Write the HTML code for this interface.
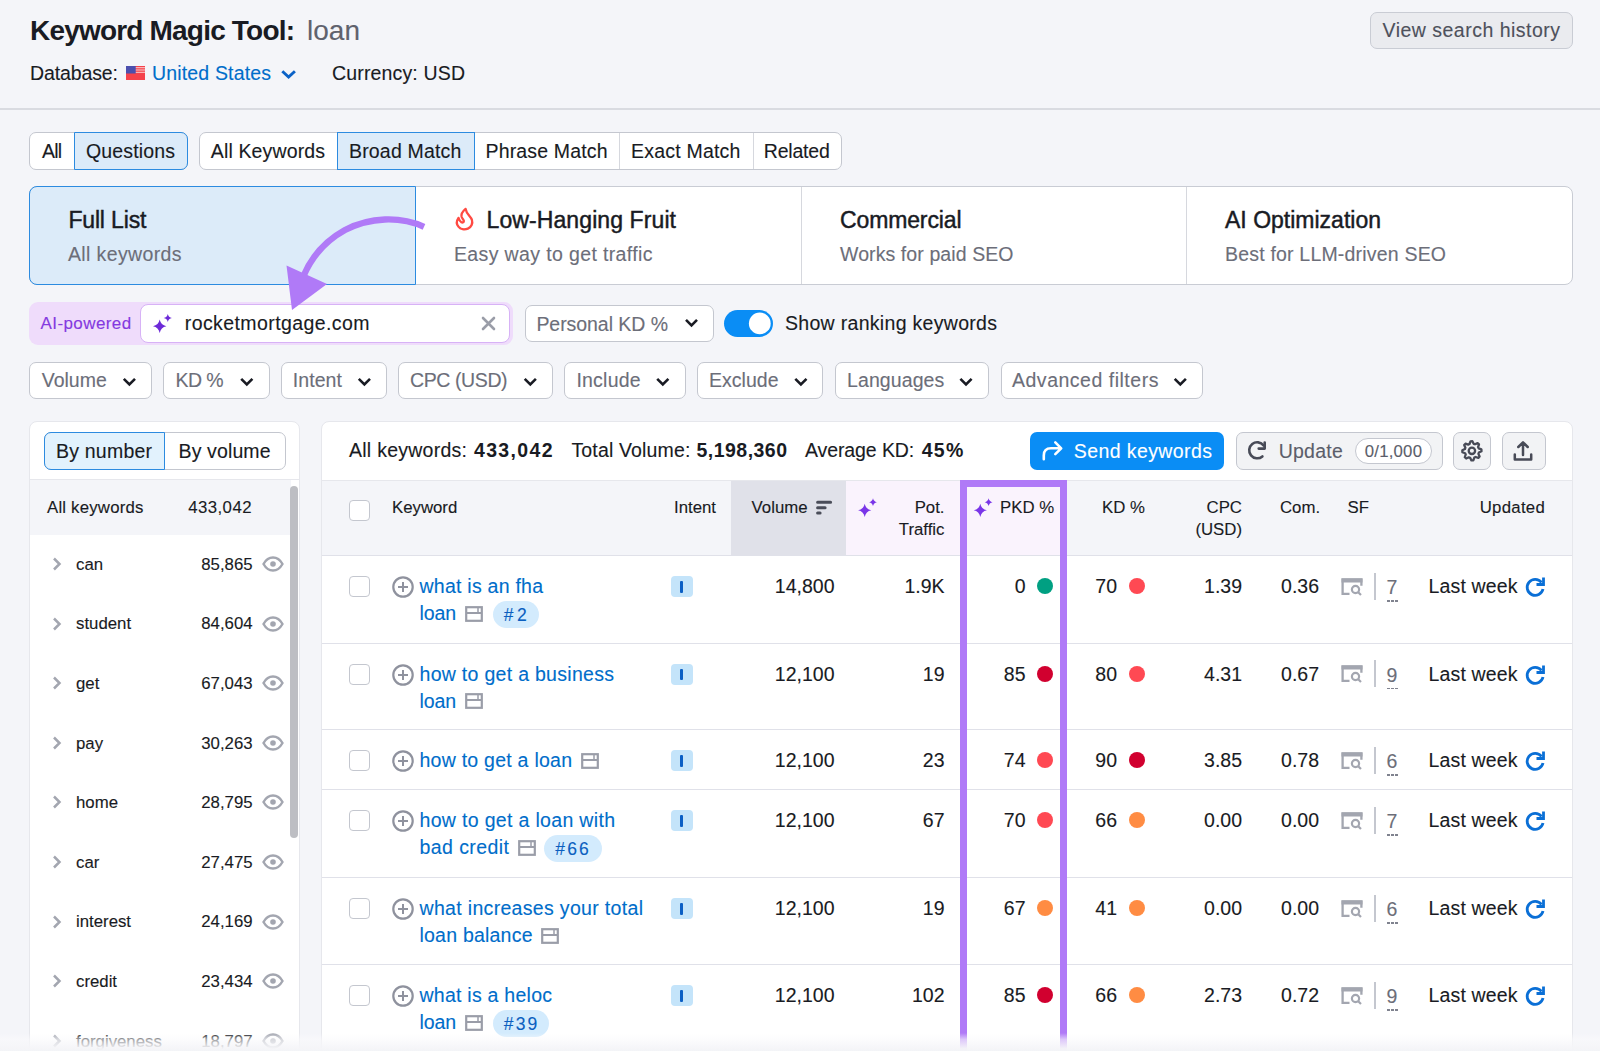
<!DOCTYPE html>
<html><head><meta charset="utf-8"><style>*{box-sizing:border-box;margin:0;padding:0}
html,body{width:1600px;height:1051px;overflow:hidden;background:#f4f5f9;font-family:"Liberation Sans",sans-serif;color:#191b23}
.a{position:absolute}
.t{position:absolute;white-space:nowrap;line-height:1;-webkit-text-stroke:0.12px currentColor}
.cb{width:21px;height:21px;border:1px solid #c4c7cf;border-radius:4px;background:#fff}
.ib{width:21.5px;height:21px;border-radius:4px;background:#c4e4fa}
.ib i{position:absolute;left:9.3px;top:5px;width:3px;height:11.5px;background:#0b5fc4;border-radius:1px}
.dot{width:16px;height:16px;border-radius:50%}
</style></head><body>
<div class="a" style="left:1370px;top:11.5px;width:202.5px;height:37.0px;border:1px solid #c9ccd4;border-radius:7px;background:#eaebef"></div>
<div class="a" style="left:0px;top:107.5px;width:1600px;height:2.0px;background:#d9dbe1"></div>
<div class="a" style="left:29px;top:131.5px;width:158.5px;height:38.0px;border:1px solid #c4c7cf;border-radius:7px;background:#fff"></div>
<div class="a" style="left:73.5px;top:131.5px;width:114.0px;height:38.0px;border:1px solid #2c8be0;border-radius:0 7px 7px 0;background:#dcebf9"></div>
<div class="a" style="left:199px;top:131.5px;width:642.5px;height:38.0px;border:1px solid #c4c7cf;border-radius:7px;background:#fff"></div>
<div class="a" style="left:337px;top:131.5px;width:137.5px;height:38.0px;border:1px solid #2c8be0;background:#dcebf9"></div>
<div class="a" style="left:619px;top:132.5px;width:1px;height:36.0px;background:#d6d8de"></div>
<div class="a" style="left:752.5px;top:132.5px;width:1.0px;height:36.0px;background:#d6d8de"></div>
<div class="a" style="left:29px;top:185.5px;width:1543.5px;height:99.5px;border:1px solid #c9ccd4;border-radius:8px;background:#fff"></div>
<div class="a" style="left:801px;top:186.5px;width:1px;height:97.5px;background:#d6d8de"></div>
<div class="a" style="left:1186px;top:186.5px;width:1px;height:97.5px;background:#d6d8de"></div>
<div class="a" style="left:29px;top:185.5px;width:387px;height:99.5px;border:1px solid #2c8be0;border-radius:8px 0 0 8px;background:#dcebf9"></div>
<div class="a" style="left:29px;top:302px;width:483.5px;height:42.5px;border-radius:9px;background:#efdcfb"></div>
<div class="a" style="left:139.5px;top:304px;width:370.5px;height:38.5px;border:1.5px solid #d7b2f6;border-radius:8px;background:#fff"></div>
<div class="a" style="left:524.5px;top:304.5px;width:189.0px;height:37.5px;border:1px solid #c4c7cf;border-radius:7px;background:#fff"></div>
<div class="a" style="left:724px;top:310px;width:49px;height:27px;border-radius:14px;background:#0a8df5"></div>
<div class="a" style="left:28.75px;top:361.5px;width:123.25px;height:37.5px;border:1px solid #c4c7cf;border-radius:7px;background:#fff"></div>
<div class="a" style="left:162.8px;top:361.5px;width:106.80000000000001px;height:37.5px;border:1px solid #c4c7cf;border-radius:7px;background:#fff"></div>
<div class="a" style="left:280.8px;top:361.5px;width:106.0px;height:37.5px;border:1px solid #c4c7cf;border-radius:7px;background:#fff"></div>
<div class="a" style="left:398px;top:361.5px;width:155px;height:37.5px;border:1px solid #c4c7cf;border-radius:7px;background:#fff"></div>
<div class="a" style="left:564px;top:361.5px;width:122px;height:37.5px;border:1px solid #c4c7cf;border-radius:7px;background:#fff"></div>
<div class="a" style="left:697px;top:361.5px;width:126.39999999999998px;height:37.5px;border:1px solid #c4c7cf;border-radius:7px;background:#fff"></div>
<div class="a" style="left:834.7px;top:361.5px;width:154.29999999999995px;height:37.5px;border:1px solid #c4c7cf;border-radius:7px;background:#fff"></div>
<div class="a" style="left:1000.5px;top:361.5px;width:202.5px;height:37.5px;border:1px solid #c4c7cf;border-radius:7px;background:#fff"></div>
<div class="a" style="left:29px;top:420.5px;width:271px;height:679.5px;border:1px solid #e6e7ec;border-radius:8px;background:#fff"></div>
<div class="a" style="left:43.5px;top:432px;width:242.0px;height:37.5px;border:1px solid #c4c7cf;border-radius:7px;background:#fff"></div>
<div class="a" style="left:43.5px;top:432px;width:121.5px;height:37.5px;border:1px solid #2c8be0;border-radius:7px 0 0 7px;background:#e2f2fd"></div>
<div class="a" style="left:30px;top:478.5px;width:269px;height:1.0px;background:#e6e7ec"></div>
<div class="a" style="left:30px;top:479.5px;width:261px;height:55.0px;background:#f4f5f9"></div>
<div class="a" style="left:290.2px;top:486px;width:8.0px;height:352px;border-radius:4px;background:#bdbec3"></div>
<svg class="a" style="left:51px;top:556.0px" width="12" height="16" viewBox="0 0 12 16"><path d="M3 2.5l5.5 5.5L3 13.5" fill="none" stroke="#a3a6b0" stroke-width="2.5"/></svg>
<svg class="a" style="left:262px;top:555.0px" width="22" height="18" viewBox="0 0 22 18"><path d="M1.5 9C4 4.5 7.2 2.5 11 2.5S18 4.5 20.5 9C18 13.5 14.8 15.5 11 15.5S4 13.5 1.5 9Z" fill="none" stroke="#a3a6b0" stroke-width="2.4"/><circle cx="11" cy="9" r="2.8" fill="#a3a6b0"/></svg>
<svg class="a" style="left:51px;top:615.6px" width="12" height="16" viewBox="0 0 12 16"><path d="M3 2.5l5.5 5.5L3 13.5" fill="none" stroke="#a3a6b0" stroke-width="2.5"/></svg>
<svg class="a" style="left:262px;top:614.6px" width="22" height="18" viewBox="0 0 22 18"><path d="M1.5 9C4 4.5 7.2 2.5 11 2.5S18 4.5 20.5 9C18 13.5 14.8 15.5 11 15.5S4 13.5 1.5 9Z" fill="none" stroke="#a3a6b0" stroke-width="2.4"/><circle cx="11" cy="9" r="2.8" fill="#a3a6b0"/></svg>
<svg class="a" style="left:51px;top:675.2px" width="12" height="16" viewBox="0 0 12 16"><path d="M3 2.5l5.5 5.5L3 13.5" fill="none" stroke="#a3a6b0" stroke-width="2.5"/></svg>
<svg class="a" style="left:262px;top:674.2px" width="22" height="18" viewBox="0 0 22 18"><path d="M1.5 9C4 4.5 7.2 2.5 11 2.5S18 4.5 20.5 9C18 13.5 14.8 15.5 11 15.5S4 13.5 1.5 9Z" fill="none" stroke="#a3a6b0" stroke-width="2.4"/><circle cx="11" cy="9" r="2.8" fill="#a3a6b0"/></svg>
<svg class="a" style="left:51px;top:734.8px" width="12" height="16" viewBox="0 0 12 16"><path d="M3 2.5l5.5 5.5L3 13.5" fill="none" stroke="#a3a6b0" stroke-width="2.5"/></svg>
<svg class="a" style="left:262px;top:733.8px" width="22" height="18" viewBox="0 0 22 18"><path d="M1.5 9C4 4.5 7.2 2.5 11 2.5S18 4.5 20.5 9C18 13.5 14.8 15.5 11 15.5S4 13.5 1.5 9Z" fill="none" stroke="#a3a6b0" stroke-width="2.4"/><circle cx="11" cy="9" r="2.8" fill="#a3a6b0"/></svg>
<svg class="a" style="left:51px;top:794.4px" width="12" height="16" viewBox="0 0 12 16"><path d="M3 2.5l5.5 5.5L3 13.5" fill="none" stroke="#a3a6b0" stroke-width="2.5"/></svg>
<svg class="a" style="left:262px;top:793.4px" width="22" height="18" viewBox="0 0 22 18"><path d="M1.5 9C4 4.5 7.2 2.5 11 2.5S18 4.5 20.5 9C18 13.5 14.8 15.5 11 15.5S4 13.5 1.5 9Z" fill="none" stroke="#a3a6b0" stroke-width="2.4"/><circle cx="11" cy="9" r="2.8" fill="#a3a6b0"/></svg>
<svg class="a" style="left:51px;top:854.0px" width="12" height="16" viewBox="0 0 12 16"><path d="M3 2.5l5.5 5.5L3 13.5" fill="none" stroke="#a3a6b0" stroke-width="2.5"/></svg>
<svg class="a" style="left:262px;top:853.0px" width="22" height="18" viewBox="0 0 22 18"><path d="M1.5 9C4 4.5 7.2 2.5 11 2.5S18 4.5 20.5 9C18 13.5 14.8 15.5 11 15.5S4 13.5 1.5 9Z" fill="none" stroke="#a3a6b0" stroke-width="2.4"/><circle cx="11" cy="9" r="2.8" fill="#a3a6b0"/></svg>
<svg class="a" style="left:51px;top:913.6px" width="12" height="16" viewBox="0 0 12 16"><path d="M3 2.5l5.5 5.5L3 13.5" fill="none" stroke="#a3a6b0" stroke-width="2.5"/></svg>
<svg class="a" style="left:262px;top:912.6px" width="22" height="18" viewBox="0 0 22 18"><path d="M1.5 9C4 4.5 7.2 2.5 11 2.5S18 4.5 20.5 9C18 13.5 14.8 15.5 11 15.5S4 13.5 1.5 9Z" fill="none" stroke="#a3a6b0" stroke-width="2.4"/><circle cx="11" cy="9" r="2.8" fill="#a3a6b0"/></svg>
<svg class="a" style="left:51px;top:973.2px" width="12" height="16" viewBox="0 0 12 16"><path d="M3 2.5l5.5 5.5L3 13.5" fill="none" stroke="#a3a6b0" stroke-width="2.5"/></svg>
<svg class="a" style="left:262px;top:972.2px" width="22" height="18" viewBox="0 0 22 18"><path d="M1.5 9C4 4.5 7.2 2.5 11 2.5S18 4.5 20.5 9C18 13.5 14.8 15.5 11 15.5S4 13.5 1.5 9Z" fill="none" stroke="#a3a6b0" stroke-width="2.4"/><circle cx="11" cy="9" r="2.8" fill="#a3a6b0"/></svg>
<svg class="a" style="left:51px;top:1032.8px" width="12" height="16" viewBox="0 0 12 16"><path d="M3 2.5l5.5 5.5L3 13.5" fill="none" stroke="#a3a6b0" stroke-width="2.5"/></svg>
<svg class="a" style="left:262px;top:1031.8px" width="22" height="18" viewBox="0 0 22 18"><path d="M1.5 9C4 4.5 7.2 2.5 11 2.5S18 4.5 20.5 9C18 13.5 14.8 15.5 11 15.5S4 13.5 1.5 9Z" fill="none" stroke="#a3a6b0" stroke-width="2.4"/><circle cx="11" cy="9" r="2.8" fill="#a3a6b0"/></svg>
<div class="a" style="left:321px;top:420.5px;width:1252px;height:679.5px;border:1px solid #e6e7ec;border-radius:8px;background:#fff"></div>
<div class="a" style="left:1030px;top:432px;width:194px;height:37.5px;border-radius:7px;background:#0a8df5"></div>
<div class="a" style="left:1235.5px;top:432px;width:207.0px;height:37.5px;border:1px solid #c4c7cf;border-radius:7px;background:#f2f3f5"></div>
<div class="a" style="left:1354.6px;top:438px;width:77.70000000000005px;height:26px;border:1px solid #c4c7cf;border-radius:13px;background:#fff"></div>
<div class="a" style="left:1453px;top:432px;width:37.5px;height:37.5px;border:1px solid #c4c7cf;border-radius:7px;background:#f2f3f5"></div>
<div class="a" style="left:1501.5px;top:432px;width:44.0px;height:37.5px;border:1px solid #c4c7cf;border-radius:7px;background:#f2f3f5"></div>
<div class="a" style="left:322px;top:480px;width:1250px;height:75.5px;background:#f4f5f9;border-top:1px solid #e6e7ec;border-bottom:1px solid #e0e1e9"></div>
<div class="a" style="left:730.7px;top:481px;width:115.29999999999995px;height:73.5px;background:#e0e1e9"></div>
<div class="a" style="left:846px;top:481px;width:114px;height:73.5px;background:#faf3fd"></div>
<div class="a" style="left:960px;top:481px;width:107px;height:73.5px;background:#faf3fd"></div>
<div class="a cb" style="left:349px;top:499.5px"></div>
<div class="a" style="left:322px;top:642.5px;width:1250px;height:1.0px;background:#e0e1e9"></div>
<div class="a cb" style="left:349px;top:576.0px"></div>
<svg class="a" style="left:392px;top:576.0px" width="22" height="22" viewBox="0 0 22 22"><circle cx="11" cy="11" r="9.7" fill="none" stroke="#8f929e" stroke-width="2.2"/><path d="M11 6v10M6 11h10" stroke="#8f929e" stroke-width="2"/></svg>
<svg class="a" style="left:464.5px;top:605.5px" width="18" height="16" viewBox="0 0 18 16"><rect x="1.2" y="1.2" width="15.6" height="13.6" fill="none" stroke="#9a9da8" stroke-width="2.2"/><path d="M1.5 7h15" stroke="#9a9da8" stroke-width="2"/><path d="M13 2v4" stroke="#9a9da8" stroke-width="1.5"/></svg>
<div class="a" style="left:492.5px;top:601.0px;width:46.25px;height:27.0px;border-radius:14px;background:#d3ebfd"></div>
<div class="a ib" style="left:671px;top:576.0px"><i></i></div>
<div class="a dot" style="left:1037px;top:578.0px;background:#00a082"></div>
<div class="a dot" style="left:1128.5px;top:578.0px;background:#ff4953"></div>
<svg class="a" style="left:1341px;top:577.5px" width="22" height="18" viewBox="0 0 22 18"><path d="M8.5 15.8H1.6V1.5h18.8V7.8" fill="none" stroke="#a3a6b0" stroke-width="2.3"/><rect x="0.5" y="0.5" width="21" height="4" fill="#a3a6b0"/><circle cx="14.5" cy="11.5" r="3.6" fill="none" stroke="#a3a6b0" stroke-width="2.2"/><path d="M17 14l3 3" stroke="#a3a6b0" stroke-width="2.2"/></svg>
<div class="a" style="left:1374px;top:572.5px;width:1.5px;height:27.0px;background:#c4c7cf"></div>
<div class="a" style="left:1386.5px;top:600.0px;width:11.0px;height:1.6000000000000227px;background:repeating-linear-gradient(90deg,#80838f 0 3px,transparent 3px 4px)"></div>
<svg class="a" style="left:1524px;top:576.0px" width="22" height="22" viewBox="0 0 22 22"><path d="M17.5 6.5A8 8 0 1 0 19 13" fill="none" stroke="#0a6fd6" stroke-width="2.8"/><path d="M19.5 1.5v7h-7" fill="none" stroke="#0a6fd6" stroke-width="2.8"/></svg>
<div class="a" style="left:322px;top:729.0px;width:1250px;height:1.0px;background:#e0e1e9"></div>
<div class="a cb" style="left:349px;top:663.5px"></div>
<svg class="a" style="left:392px;top:663.5px" width="22" height="22" viewBox="0 0 22 22"><circle cx="11" cy="11" r="9.7" fill="none" stroke="#8f929e" stroke-width="2.2"/><path d="M11 6v10M6 11h10" stroke="#8f929e" stroke-width="2"/></svg>
<svg class="a" style="left:464.5px;top:693.0px" width="18" height="16" viewBox="0 0 18 16"><rect x="1.2" y="1.2" width="15.6" height="13.6" fill="none" stroke="#9a9da8" stroke-width="2.2"/><path d="M1.5 7h15" stroke="#9a9da8" stroke-width="2"/><path d="M13 2v4" stroke="#9a9da8" stroke-width="1.5"/></svg>
<div class="a ib" style="left:671px;top:663.5px"><i></i></div>
<div class="a dot" style="left:1037px;top:665.5px;background:#d1002f"></div>
<div class="a dot" style="left:1128.5px;top:665.5px;background:#ff4953"></div>
<svg class="a" style="left:1341px;top:665.0px" width="22" height="18" viewBox="0 0 22 18"><path d="M8.5 15.8H1.6V1.5h18.8V7.8" fill="none" stroke="#a3a6b0" stroke-width="2.3"/><rect x="0.5" y="0.5" width="21" height="4" fill="#a3a6b0"/><circle cx="14.5" cy="11.5" r="3.6" fill="none" stroke="#a3a6b0" stroke-width="2.2"/><path d="M17 14l3 3" stroke="#a3a6b0" stroke-width="2.2"/></svg>
<div class="a" style="left:1374px;top:660.0px;width:1.5px;height:27.0px;background:#c4c7cf"></div>
<div class="a" style="left:1386.5px;top:687.5px;width:11.0px;height:1.6000000000000227px;background:repeating-linear-gradient(90deg,#80838f 0 3px,transparent 3px 4px)"></div>
<svg class="a" style="left:1524px;top:663.5px" width="22" height="22" viewBox="0 0 22 22"><path d="M17.5 6.5A8 8 0 1 0 19 13" fill="none" stroke="#0a6fd6" stroke-width="2.8"/><path d="M19.5 1.5v7h-7" fill="none" stroke="#0a6fd6" stroke-width="2.8"/></svg>
<div class="a" style="left:322px;top:789.0px;width:1250px;height:1.0px;background:#e0e1e9"></div>
<div class="a cb" style="left:349px;top:750.0px"></div>
<svg class="a" style="left:392px;top:750.0px" width="22" height="22" viewBox="0 0 22 22"><circle cx="11" cy="11" r="9.7" fill="none" stroke="#8f929e" stroke-width="2.2"/><path d="M11 6v10M6 11h10" stroke="#8f929e" stroke-width="2"/></svg>
<svg class="a" style="left:580.75px;top:752.5px" width="18" height="16" viewBox="0 0 18 16"><rect x="1.2" y="1.2" width="15.6" height="13.6" fill="none" stroke="#9a9da8" stroke-width="2.2"/><path d="M1.5 7h15" stroke="#9a9da8" stroke-width="2"/><path d="M13 2v4" stroke="#9a9da8" stroke-width="1.5"/></svg>
<div class="a ib" style="left:671px;top:750.0px"><i></i></div>
<div class="a dot" style="left:1037px;top:752.0px;background:#ff4953"></div>
<div class="a dot" style="left:1128.5px;top:752.0px;background:#d1002f"></div>
<svg class="a" style="left:1341px;top:751.5px" width="22" height="18" viewBox="0 0 22 18"><path d="M8.5 15.8H1.6V1.5h18.8V7.8" fill="none" stroke="#a3a6b0" stroke-width="2.3"/><rect x="0.5" y="0.5" width="21" height="4" fill="#a3a6b0"/><circle cx="14.5" cy="11.5" r="3.6" fill="none" stroke="#a3a6b0" stroke-width="2.2"/><path d="M17 14l3 3" stroke="#a3a6b0" stroke-width="2.2"/></svg>
<div class="a" style="left:1374px;top:746.5px;width:1.5px;height:27.0px;background:#c4c7cf"></div>
<div class="a" style="left:1386.5px;top:774.0px;width:11.0px;height:1.6000000000000227px;background:repeating-linear-gradient(90deg,#80838f 0 3px,transparent 3px 4px)"></div>
<svg class="a" style="left:1524px;top:750.0px" width="22" height="22" viewBox="0 0 22 22"><path d="M17.5 6.5A8 8 0 1 0 19 13" fill="none" stroke="#0a6fd6" stroke-width="2.8"/><path d="M19.5 1.5v7h-7" fill="none" stroke="#0a6fd6" stroke-width="2.8"/></svg>
<div class="a" style="left:322px;top:877.0px;width:1250px;height:1.0px;background:#e0e1e9"></div>
<div class="a cb" style="left:349px;top:810.0px"></div>
<svg class="a" style="left:392px;top:810.0px" width="22" height="22" viewBox="0 0 22 22"><circle cx="11" cy="11" r="9.7" fill="none" stroke="#8f929e" stroke-width="2.2"/><path d="M11 6v10M6 11h10" stroke="#8f929e" stroke-width="2"/></svg>
<svg class="a" style="left:517.5px;top:839.5px" width="18" height="16" viewBox="0 0 18 16"><rect x="1.2" y="1.2" width="15.6" height="13.6" fill="none" stroke="#9a9da8" stroke-width="2.2"/><path d="M1.5 7h15" stroke="#9a9da8" stroke-width="2"/><path d="M13 2v4" stroke="#9a9da8" stroke-width="1.5"/></svg>
<div class="a" style="left:544px;top:835.0px;width:58px;height:27.0px;border-radius:14px;background:#d3ebfd"></div>
<div class="a ib" style="left:671px;top:810.0px"><i></i></div>
<div class="a dot" style="left:1037px;top:812.0px;background:#ff4953"></div>
<div class="a dot" style="left:1128.5px;top:812.0px;background:#ff8c43"></div>
<svg class="a" style="left:1341px;top:811.5px" width="22" height="18" viewBox="0 0 22 18"><path d="M8.5 15.8H1.6V1.5h18.8V7.8" fill="none" stroke="#a3a6b0" stroke-width="2.3"/><rect x="0.5" y="0.5" width="21" height="4" fill="#a3a6b0"/><circle cx="14.5" cy="11.5" r="3.6" fill="none" stroke="#a3a6b0" stroke-width="2.2"/><path d="M17 14l3 3" stroke="#a3a6b0" stroke-width="2.2"/></svg>
<div class="a" style="left:1374px;top:806.5px;width:1.5px;height:27.0px;background:#c4c7cf"></div>
<div class="a" style="left:1386.5px;top:834.0px;width:11.0px;height:1.6000000000000227px;background:repeating-linear-gradient(90deg,#80838f 0 3px,transparent 3px 4px)"></div>
<svg class="a" style="left:1524px;top:810.0px" width="22" height="22" viewBox="0 0 22 22"><path d="M17.5 6.5A8 8 0 1 0 19 13" fill="none" stroke="#0a6fd6" stroke-width="2.8"/><path d="M19.5 1.5v7h-7" fill="none" stroke="#0a6fd6" stroke-width="2.8"/></svg>
<div class="a" style="left:322px;top:964.0px;width:1250px;height:1.0px;background:#e0e1e9"></div>
<div class="a cb" style="left:349px;top:898.0px"></div>
<svg class="a" style="left:392px;top:898.0px" width="22" height="22" viewBox="0 0 22 22"><circle cx="11" cy="11" r="9.7" fill="none" stroke="#8f929e" stroke-width="2.2"/><path d="M11 6v10M6 11h10" stroke="#8f929e" stroke-width="2"/></svg>
<svg class="a" style="left:540.75px;top:927.5px" width="18" height="16" viewBox="0 0 18 16"><rect x="1.2" y="1.2" width="15.6" height="13.6" fill="none" stroke="#9a9da8" stroke-width="2.2"/><path d="M1.5 7h15" stroke="#9a9da8" stroke-width="2"/><path d="M13 2v4" stroke="#9a9da8" stroke-width="1.5"/></svg>
<div class="a ib" style="left:671px;top:898.0px"><i></i></div>
<div class="a dot" style="left:1037px;top:900.0px;background:#ff8c43"></div>
<div class="a dot" style="left:1128.5px;top:900.0px;background:#ff8c43"></div>
<svg class="a" style="left:1341px;top:899.5px" width="22" height="18" viewBox="0 0 22 18"><path d="M8.5 15.8H1.6V1.5h18.8V7.8" fill="none" stroke="#a3a6b0" stroke-width="2.3"/><rect x="0.5" y="0.5" width="21" height="4" fill="#a3a6b0"/><circle cx="14.5" cy="11.5" r="3.6" fill="none" stroke="#a3a6b0" stroke-width="2.2"/><path d="M17 14l3 3" stroke="#a3a6b0" stroke-width="2.2"/></svg>
<div class="a" style="left:1374px;top:894.5px;width:1.5px;height:27.0px;background:#c4c7cf"></div>
<div class="a" style="left:1386.5px;top:922.0px;width:11.0px;height:1.6000000000000227px;background:repeating-linear-gradient(90deg,#80838f 0 3px,transparent 3px 4px)"></div>
<svg class="a" style="left:1524px;top:898.0px" width="22" height="22" viewBox="0 0 22 22"><path d="M17.5 6.5A8 8 0 1 0 19 13" fill="none" stroke="#0a6fd6" stroke-width="2.8"/><path d="M19.5 1.5v7h-7" fill="none" stroke="#0a6fd6" stroke-width="2.8"/></svg>
<div class="a cb" style="left:349px;top:985.0px"></div>
<svg class="a" style="left:392px;top:985.0px" width="22" height="22" viewBox="0 0 22 22"><circle cx="11" cy="11" r="9.7" fill="none" stroke="#8f929e" stroke-width="2.2"/><path d="M11 6v10M6 11h10" stroke="#8f929e" stroke-width="2"/></svg>
<svg class="a" style="left:464.5px;top:1014.5px" width="18" height="16" viewBox="0 0 18 16"><rect x="1.2" y="1.2" width="15.6" height="13.6" fill="none" stroke="#9a9da8" stroke-width="2.2"/><path d="M1.5 7h15" stroke="#9a9da8" stroke-width="2"/><path d="M13 2v4" stroke="#9a9da8" stroke-width="1.5"/></svg>
<div class="a" style="left:492.5px;top:1010.0px;width:56.5px;height:27.0px;border-radius:14px;background:#d3ebfd"></div>
<div class="a ib" style="left:671px;top:985.0px"><i></i></div>
<div class="a dot" style="left:1037px;top:987.0px;background:#d1002f"></div>
<div class="a dot" style="left:1128.5px;top:987.0px;background:#ff8c43"></div>
<svg class="a" style="left:1341px;top:986.5px" width="22" height="18" viewBox="0 0 22 18"><path d="M8.5 15.8H1.6V1.5h18.8V7.8" fill="none" stroke="#a3a6b0" stroke-width="2.3"/><rect x="0.5" y="0.5" width="21" height="4" fill="#a3a6b0"/><circle cx="14.5" cy="11.5" r="3.6" fill="none" stroke="#a3a6b0" stroke-width="2.2"/><path d="M17 14l3 3" stroke="#a3a6b0" stroke-width="2.2"/></svg>
<div class="a" style="left:1374px;top:981.5px;width:1.5px;height:27.0px;background:#c4c7cf"></div>
<div class="a" style="left:1386.5px;top:1009.0px;width:11.0px;height:1.6000000000000227px;background:repeating-linear-gradient(90deg,#80838f 0 3px,transparent 3px 4px)"></div>
<svg class="a" style="left:1524px;top:985.0px" width="22" height="22" viewBox="0 0 22 22"><path d="M17.5 6.5A8 8 0 1 0 19 13" fill="none" stroke="#0a6fd6" stroke-width="2.8"/><path d="M19.5 1.5v7h-7" fill="none" stroke="#0a6fd6" stroke-width="2.8"/></svg>
<div class="a" style="left:960px;top:480px;width:107px;height:580px;border:7px solid #b07af7;border-bottom:none"></div>
<div class="t" id="t0" style="top:17.29px;font-size:28px;color:#191b23;font-weight:bold;-webkit-text-stroke:0;letter-spacing:-0.806px;left:30px;">Keyword Magic Tool:</div>
<div class="t" id="t1" style="top:17.29px;font-size:28px;color:#5f626d;letter-spacing:0.021px;left:307px;">loan</div>
<div class="t" id="t2" style="top:21.49px;font-size:19.5px;color:#4e515c;letter-spacing:0.488px;left:1382.5px;">View search history</div>
<div class="t" id="t3" style="top:64.49px;font-size:19.5px;color:#191b23;letter-spacing:-0.113px;left:30px;">Database:</div>
<div class="t" id="t4" style="top:64.49px;font-size:19.5px;color:#006dca;letter-spacing:0.160px;left:152px;">United States</div>
<div class="t" id="t5" style="top:64.49px;font-size:19.5px;color:#191b23;letter-spacing:0.156px;left:332px;">Currency: USD</div>
<div class="t" id="t6" style="top:142.49px;font-size:19.5px;color:#191b23;letter-spacing:-0.836px;left:42px;">All</div>
<div class="t" id="t7" style="top:142.49px;font-size:19.5px;color:#191b23;letter-spacing:0.148px;left:86px;">Questions</div>
<div class="t" id="t8" style="top:142.49px;font-size:19.5px;color:#191b23;letter-spacing:0.135px;left:210.8px;">All Keywords</div>
<div class="t" id="t9" style="top:142.49px;font-size:19.5px;color:#191b23;letter-spacing:0.174px;left:349px;">Broad Match</div>
<div class="t" id="t10" style="top:142.49px;font-size:19.5px;color:#191b23;letter-spacing:0.153px;left:485.5px;">Phrase Match</div>
<div class="t" id="t11" style="top:142.49px;font-size:19.5px;color:#191b23;letter-spacing:0.210px;left:631px;">Exact Match</div>
<div class="t" id="t12" style="top:142.49px;font-size:19.5px;color:#191b23;letter-spacing:-0.203px;left:763.8px;">Related</div>
<div class="t" id="t13" style="top:209.33px;font-size:23px;color:#191b23;-webkit-text-stroke:0.45px currentColor;letter-spacing:-0.156px;left:68.4px;">Full List</div>
<div class="t" id="t14" style="top:245.49px;font-size:19.5px;color:#6c6e79;letter-spacing:0.368px;left:68px;">All keywords</div>
<div class="t" id="t15" style="top:209.33px;font-size:23px;color:#191b23;-webkit-text-stroke:0.45px currentColor;letter-spacing:0.099px;left:486.5px;">Low-Hanging Fruit</div>
<div class="t" id="t16" style="top:245.49px;font-size:19.5px;color:#6c6e79;letter-spacing:0.368px;left:454px;">Easy way to get traffic</div>
<div class="t" id="t17" style="top:209.33px;font-size:23px;color:#191b23;-webkit-text-stroke:0.45px currentColor;letter-spacing:-0.132px;left:840px;">Commercial</div>
<div class="t" id="t18" style="top:245.49px;font-size:19.5px;color:#6c6e79;letter-spacing:0.091px;left:840px;">Works for paid SEO</div>
<div class="t" id="t19" style="top:209.33px;font-size:23px;color:#191b23;-webkit-text-stroke:0.45px currentColor;letter-spacing:0.003px;left:1225px;">AI Optimization</div>
<div class="t" id="t20" style="top:245.49px;font-size:19.5px;color:#6c6e79;letter-spacing:0.193px;left:1225px;">Best for LLM-driven SEO</div>
<div class="t" id="t21" style="top:315.11px;font-size:17px;color:#8439e0;letter-spacing:0.396px;left:40.6px;">AI-powered</div>
<div class="t" id="t22" style="top:314.49px;font-size:19.5px;color:#191b23;letter-spacing:0.409px;left:184.8px;">rocketmortgage.com</div>
<div class="t" id="t23" style="top:314.99px;font-size:19.5px;color:#6c6e79;letter-spacing:-0.053px;left:536.4px;">Personal KD %</div>
<div class="t" id="t24" style="top:313.99px;font-size:19.5px;color:#191b23;letter-spacing:0.303px;left:785px;">Show ranking keywords</div>
<div class="t" id="t25" style="top:371.29px;font-size:19.5px;color:#6c6e79;letter-spacing:0.011px;left:41.7px;">Volume</div>
<div class="t" id="t26" style="top:371.29px;font-size:19.5px;color:#6c6e79;letter-spacing:-0.520px;left:175.4px;">KD %</div>
<div class="t" id="t27" style="top:371.29px;font-size:19.5px;color:#6c6e79;letter-spacing:0.101px;left:292.7px;">Intent</div>
<div class="t" id="t28" style="top:371.29px;font-size:19.5px;color:#6c6e79;letter-spacing:-0.394px;left:410px;">CPC (USD)</div>
<div class="t" id="t29" style="top:371.29px;font-size:19.5px;color:#6c6e79;letter-spacing:0.235px;left:576.4px;">Include</div>
<div class="t" id="t30" style="top:371.29px;font-size:19.5px;color:#6c6e79;letter-spacing:0.021px;left:709px;">Exclude</div>
<div class="t" id="t31" style="top:371.29px;font-size:19.5px;color:#6c6e79;letter-spacing:0.098px;left:847px;">Languages</div>
<div class="t" id="t32" style="top:371.29px;font-size:19.5px;color:#6c6e79;letter-spacing:0.510px;left:1012px;">Advanced filters</div>
<div class="t" id="t33" style="top:442.09px;font-size:19.5px;color:#191b23;letter-spacing:0.213px;left:56px;">By number</div>
<div class="t" id="t34" style="top:442.09px;font-size:19.5px;color:#191b23;letter-spacing:0.119px;left:178.6px;">By volume</div>
<div class="t" id="t35" style="top:500.38px;font-size:16.8px;color:#191b23;letter-spacing:0.200px;left:47px;">All keywords</div>
<div class="t" id="t36" style="top:500.38px;font-size:16.8px;color:#191b23;letter-spacing:0.455px;right:1348.00px;">433,042</div>
<div class="t" id="t37" style="top:556.78px;font-size:16.8px;color:#191b23;left:76px;">can</div>
<div class="t" id="t38" style="top:556.78px;font-size:16.8px;color:#191b23;right:1347.40px;">85,865</div>
<div class="t" id="t39" style="top:616.38px;font-size:16.8px;color:#191b23;left:76px;">student</div>
<div class="t" id="t40" style="top:616.38px;font-size:16.8px;color:#191b23;right:1347.40px;">84,604</div>
<div class="t" id="t41" style="top:675.98px;font-size:16.8px;color:#191b23;left:76px;">get</div>
<div class="t" id="t42" style="top:675.98px;font-size:16.8px;color:#191b23;right:1347.40px;">67,043</div>
<div class="t" id="t43" style="top:735.58px;font-size:16.8px;color:#191b23;left:76px;">pay</div>
<div class="t" id="t44" style="top:735.58px;font-size:16.8px;color:#191b23;right:1347.40px;">30,263</div>
<div class="t" id="t45" style="top:795.18px;font-size:16.8px;color:#191b23;left:76px;">home</div>
<div class="t" id="t46" style="top:795.18px;font-size:16.8px;color:#191b23;right:1347.40px;">28,795</div>
<div class="t" id="t47" style="top:854.78px;font-size:16.8px;color:#191b23;left:76px;">car</div>
<div class="t" id="t48" style="top:854.78px;font-size:16.8px;color:#191b23;right:1347.40px;">27,475</div>
<div class="t" id="t49" style="top:914.38px;font-size:16.8px;color:#191b23;left:76px;">interest</div>
<div class="t" id="t50" style="top:914.38px;font-size:16.8px;color:#191b23;right:1347.40px;">24,169</div>
<div class="t" id="t51" style="top:973.98px;font-size:16.8px;color:#191b23;left:76px;">credit</div>
<div class="t" id="t52" style="top:973.98px;font-size:16.8px;color:#191b23;right:1347.40px;">23,434</div>
<div class="t" id="t53" style="top:1033.58px;font-size:16.8px;color:#191b23;left:76px;">forgiveness</div>
<div class="t" id="t54" style="top:1033.58px;font-size:16.8px;color:#191b23;right:1347.40px;">18,797</div>
<div class="t" id="t55" style="top:441.49px;font-size:19.5px;color:#191b23;letter-spacing:0.260px;left:349px;">All keywords:</div>
<div class="t" id="t56" style="top:441.49px;font-size:19.5px;color:#191b23;font-weight:bold;-webkit-text-stroke:0;letter-spacing:1.333px;left:474px;">433,042</div>
<div class="t" id="t57" style="top:441.49px;font-size:19.5px;color:#191b23;letter-spacing:0.160px;left:571.4px;">Total Volume:</div>
<div class="t" id="t58" style="top:441.49px;font-size:19.5px;color:#191b23;font-weight:bold;-webkit-text-stroke:0;letter-spacing:0.467px;left:696.5px;">5,198,360</div>
<div class="t" id="t59" style="top:441.49px;font-size:19.5px;color:#191b23;letter-spacing:-0.100px;left:805px;">Average KD:</div>
<div class="t" id="t60" style="top:441.49px;font-size:19.5px;color:#191b23;font-weight:bold;-webkit-text-stroke:0;letter-spacing:1.334px;left:921.7px;">45%</div>
<div class="t" id="t61" style="top:442.49px;font-size:19.5px;color:#fff;letter-spacing:0.406px;left:1073.8px;">Send keywords</div>
<div class="t" id="t62" style="top:442.49px;font-size:19.5px;color:#5b5e6a;letter-spacing:0.242px;left:1278.7px;">Update</div>
<div class="t" id="t63" style="top:443.78px;font-size:16.8px;color:#5b5e6a;letter-spacing:0.200px;left:1364.8px;">0/1,000</div>
<div class="t" id="t64" style="top:500.18px;font-size:16.8px;color:#191b23;left:392px;">Keyword</div>
<div class="t" id="t65" style="top:500.18px;font-size:16.8px;color:#191b23;right:884.00px;">Intent</div>
<div class="t" id="t66" style="top:500.18px;font-size:16.8px;color:#191b23;left:751.6px;">Volume</div>
<div class="t" id="t67" style="top:500.18px;font-size:16.8px;color:#191b23;right:655.50px;">Pot.</div>
<div class="t" id="t68" style="top:521.58px;font-size:16.8px;color:#191b23;right:655.50px;">Traffic</div>
<div class="t" id="t69" style="top:500.18px;font-size:16.8px;color:#191b23;left:1000px;">PKD %</div>
<div class="t" id="t70" style="top:500.18px;font-size:16.8px;color:#191b23;left:1102px;">KD %</div>
<div class="t" id="t71" style="top:500.18px;font-size:16.8px;color:#191b23;right:358.00px;">CPC</div>
<div class="t" id="t72" style="top:521.58px;font-size:16.8px;color:#191b23;right:358.00px;">(USD)</div>
<div class="t" id="t73" style="top:500.18px;font-size:16.8px;color:#191b23;left:1280px;">Com.</div>
<div class="t" id="t74" style="top:500.18px;font-size:16.8px;color:#191b23;left:1347.5px;">SF</div>
<div class="t" id="t75" style="top:500.18px;font-size:16.8px;color:#191b23;letter-spacing:0.258px;right:55.00px;">Updated</div>
<div class="t" id="t76" style="top:577.49px;font-size:19.5px;color:#006dca;letter-spacing:0.244px;left:419.5px;">what is an fha</div>
<div class="t" id="t77" style="top:604.49px;font-size:19.5px;color:#006dca;letter-spacing:-0.125px;left:419.5px;">loan</div>
<div class="t" id="t78" style="top:607.18px;font-size:17.5px;color:#0b5fc0;letter-spacing:3.531px;left:503.75px;">#2</div>
<div class="t" id="t79" style="top:577.49px;font-size:19.5px;color:#191b23;right:765.50px;">14,800</div>
<div class="t" id="t80" style="top:577.49px;font-size:19.5px;color:#191b23;right:655.50px;">1.9K</div>
<div class="t" id="t81" style="top:577.49px;font-size:19.5px;color:#191b23;right:574.50px;">0</div>
<div class="t" id="t82" style="top:577.49px;font-size:19.5px;color:#191b23;right:483.00px;">70</div>
<div class="t" id="t83" style="top:577.49px;font-size:19.5px;color:#191b23;right:358.00px;">1.39</div>
<div class="t" id="t84" style="top:577.49px;font-size:19.5px;color:#191b23;right:281.00px;">0.36</div>
<div class="t" id="t85" style="top:578.49px;font-size:19.5px;color:#6c6e79;left:1386.5px;">7</div>
<div class="t" id="t86" style="top:577.49px;font-size:19.5px;color:#191b23;letter-spacing:0.161px;left:1428.5px;">Last week</div>
<div class="t" id="t87" style="top:664.99px;font-size:19.5px;color:#006dca;letter-spacing:0.294px;left:419.5px;">how to get a business</div>
<div class="t" id="t88" style="top:691.99px;font-size:19.5px;color:#006dca;letter-spacing:-0.125px;left:419.5px;">loan</div>
<div class="t" id="t89" style="top:664.99px;font-size:19.5px;color:#191b23;right:765.50px;">12,100</div>
<div class="t" id="t90" style="top:664.99px;font-size:19.5px;color:#191b23;right:655.50px;">19</div>
<div class="t" id="t91" style="top:664.99px;font-size:19.5px;color:#191b23;right:574.50px;">85</div>
<div class="t" id="t92" style="top:664.99px;font-size:19.5px;color:#191b23;right:483.00px;">80</div>
<div class="t" id="t93" style="top:664.99px;font-size:19.5px;color:#191b23;right:358.00px;">4.31</div>
<div class="t" id="t94" style="top:664.99px;font-size:19.5px;color:#191b23;right:281.00px;">0.67</div>
<div class="t" id="t95" style="top:665.99px;font-size:19.5px;color:#6c6e79;left:1386.5px;">9</div>
<div class="t" id="t96" style="top:664.99px;font-size:19.5px;color:#191b23;letter-spacing:0.161px;left:1428.5px;">Last week</div>
<div class="t" id="t97" style="top:751.49px;font-size:19.5px;color:#006dca;letter-spacing:0.248px;left:419.5px;">how to get a loan</div>
<div class="t" id="t98" style="top:751.49px;font-size:19.5px;color:#191b23;right:765.50px;">12,100</div>
<div class="t" id="t99" style="top:751.49px;font-size:19.5px;color:#191b23;right:655.50px;">23</div>
<div class="t" id="t100" style="top:751.49px;font-size:19.5px;color:#191b23;right:574.50px;">74</div>
<div class="t" id="t101" style="top:751.49px;font-size:19.5px;color:#191b23;right:483.00px;">90</div>
<div class="t" id="t102" style="top:751.49px;font-size:19.5px;color:#191b23;right:358.00px;">3.85</div>
<div class="t" id="t103" style="top:751.49px;font-size:19.5px;color:#191b23;right:281.00px;">0.78</div>
<div class="t" id="t104" style="top:752.49px;font-size:19.5px;color:#6c6e79;left:1386.5px;">6</div>
<div class="t" id="t105" style="top:751.49px;font-size:19.5px;color:#191b23;letter-spacing:0.161px;left:1428.5px;">Last week</div>
<div class="t" id="t106" style="top:811.49px;font-size:19.5px;color:#006dca;letter-spacing:0.327px;left:419.5px;">how to get a loan with</div>
<div class="t" id="t107" style="top:838.49px;font-size:19.5px;color:#006dca;letter-spacing:0.429px;left:419.5px;">bad credit</div>
<div class="t" id="t108" style="top:841.18px;font-size:17.5px;color:#0b5fc0;letter-spacing:2.148px;left:555.25px;">#66</div>
<div class="t" id="t109" style="top:811.49px;font-size:19.5px;color:#191b23;right:765.50px;">12,100</div>
<div class="t" id="t110" style="top:811.49px;font-size:19.5px;color:#191b23;right:655.50px;">67</div>
<div class="t" id="t111" style="top:811.49px;font-size:19.5px;color:#191b23;right:574.50px;">70</div>
<div class="t" id="t112" style="top:811.49px;font-size:19.5px;color:#191b23;right:483.00px;">66</div>
<div class="t" id="t113" style="top:811.49px;font-size:19.5px;color:#191b23;right:358.00px;">0.00</div>
<div class="t" id="t114" style="top:811.49px;font-size:19.5px;color:#191b23;right:281.00px;">0.00</div>
<div class="t" id="t115" style="top:812.49px;font-size:19.5px;color:#6c6e79;left:1386.5px;">7</div>
<div class="t" id="t116" style="top:811.49px;font-size:19.5px;color:#191b23;letter-spacing:0.161px;left:1428.5px;">Last week</div>
<div class="t" id="t117" style="top:899.49px;font-size:19.5px;color:#006dca;letter-spacing:0.325px;left:419.5px;">what increases your total</div>
<div class="t" id="t118" style="top:926.49px;font-size:19.5px;color:#006dca;letter-spacing:0.219px;left:419.5px;">loan balance</div>
<div class="t" id="t119" style="top:899.49px;font-size:19.5px;color:#191b23;right:765.50px;">12,100</div>
<div class="t" id="t120" style="top:899.49px;font-size:19.5px;color:#191b23;right:655.50px;">19</div>
<div class="t" id="t121" style="top:899.49px;font-size:19.5px;color:#191b23;right:574.50px;">67</div>
<div class="t" id="t122" style="top:899.49px;font-size:19.5px;color:#191b23;right:483.00px;">41</div>
<div class="t" id="t123" style="top:899.49px;font-size:19.5px;color:#191b23;right:358.00px;">0.00</div>
<div class="t" id="t124" style="top:899.49px;font-size:19.5px;color:#191b23;right:281.00px;">0.00</div>
<div class="t" id="t125" style="top:900.49px;font-size:19.5px;color:#6c6e79;left:1386.5px;">6</div>
<div class="t" id="t126" style="top:899.49px;font-size:19.5px;color:#191b23;letter-spacing:0.161px;left:1428.5px;">Last week</div>
<div class="t" id="t127" style="top:986.49px;font-size:19.5px;color:#006dca;letter-spacing:0.250px;left:419.5px;">what is a heloc</div>
<div class="t" id="t128" style="top:1013.49px;font-size:19.5px;color:#006dca;letter-spacing:-0.125px;left:419.5px;">loan</div>
<div class="t" id="t129" style="top:1016.18px;font-size:17.5px;color:#0b5fc0;letter-spacing:2.148px;left:503.75px;">#39</div>
<div class="t" id="t130" style="top:986.49px;font-size:19.5px;color:#191b23;right:765.50px;">12,100</div>
<div class="t" id="t131" style="top:986.49px;font-size:19.5px;color:#191b23;right:655.50px;">102</div>
<div class="t" id="t132" style="top:986.49px;font-size:19.5px;color:#191b23;right:574.50px;">85</div>
<div class="t" id="t133" style="top:986.49px;font-size:19.5px;color:#191b23;right:483.00px;">66</div>
<div class="t" id="t134" style="top:986.49px;font-size:19.5px;color:#191b23;right:358.00px;">2.73</div>
<div class="t" id="t135" style="top:986.49px;font-size:19.5px;color:#191b23;right:281.00px;">0.72</div>
<div class="t" id="t136" style="top:987.49px;font-size:19.5px;color:#6c6e79;left:1386.5px;">9</div>
<div class="t" id="t137" style="top:986.49px;font-size:19.5px;color:#191b23;letter-spacing:0.161px;left:1428.5px;">Last week</div>
<svg class="a" style="left:0;top:0" width="1600" height="1051"><rect x="126" y="66" width="19" height="14" fill="#f5424b"/><rect x="126" y="67.2" width="19" height="1" fill="#fbd0d2"/><rect x="126" y="69.5" width="19" height="1" fill="#fbd0d2"/><rect x="126" y="71.8" width="19" height="1" fill="#fbd0d2"/><rect x="126" y="66" width="9.7" height="7.5" fill="#4b4fae"/><path d="M282.3 71.2l6.3 5.9 6.3-5.9" fill="none" stroke="#0b62c7" stroke-width="2.9"/><path d="M465.6 208.8C463 211 460.8 213.8 461.6 216.8C462.3 219.2 464.4 219.8 463.8 221.6C463.1 223.4 459.7 222.6 458.5 217.8C456.6 220.6 456.4 224.2 458.4 226.6C460.5 229.3 464.6 230 467.9 228.6C471.4 227.1 473 223.3 471.9 219.8C470.9 216.4 466.4 214.4 465.6 208.8Z" fill="none" stroke="#ff4a42" stroke-width="2.3" stroke-linejoin="round"/><path d="M159.7,319.5Q160.839,325.061 166.39999999999998,326.2Q160.839,327.339 159.7,332.9Q158.56099999999998,327.339 153.0,326.2Q158.56099999999998,325.061 159.7,319.5Z" fill="#6d2ad8"/><path d="M167.8,313.9Q168.497,317.303 171.9,318Q168.497,318.697 167.8,322.1Q167.103,318.697 163.70000000000002,318Q167.103,317.303 167.8,313.9Z" fill="#6d2ad8"/><path d="M483 318l11 11M494 318l-11 11" stroke="#9a9da8" stroke-width="2.6" stroke-linecap="round"/><path d="M686 319.8l5.5 5.6 5.5-5.6" fill="none" stroke="#191b23" stroke-width="2.6"/><circle cx="759.8" cy="323.4" r="10.9" fill="#fff"/><path d="M123.80000000000001 378.8l5.6 5.6 5.6-5.6" fill="none" stroke="#191b23" stroke-width="2.6"/><path d="M241.20000000000002 378.8l5.6 5.6 5.6-5.6" fill="none" stroke="#191b23" stroke-width="2.6"/><path d="M358.79999999999995 378.8l5.6 5.6 5.6-5.6" fill="none" stroke="#191b23" stroke-width="2.6"/><path d="M524.6999999999999 378.8l5.6 5.6 5.6-5.6" fill="none" stroke="#191b23" stroke-width="2.6"/><path d="M657.1999999999999 378.8l5.6 5.6 5.6-5.6" fill="none" stroke="#191b23" stroke-width="2.6"/><path d="M795.3 378.8l5.6 5.6 5.6-5.6" fill="none" stroke="#191b23" stroke-width="2.6"/><path d="M960.4 378.8l5.6 5.6 5.6-5.6" fill="none" stroke="#191b23" stroke-width="2.6"/><path d="M1174.7 378.8l5.6 5.6 5.6-5.6" fill="none" stroke="#191b23" stroke-width="2.6"/><path d="M1043.8 459.3V455.5C1043.8 451 1046.5 448.3 1051 448.3H1060.5M1055.3 442.4l5.9 5.9-5.9 5.9" fill="none" stroke="#fff" stroke-width="2.6" stroke-linecap="round" stroke-linejoin="round"/><path d="M1263.6 445.5A8 8 0 1 0 1262.4 456.4" fill="none" stroke="#484b57" stroke-width="2.6" stroke-linecap="round"/><path d="M1264.7 442.6V448.6H1258.7" fill="none" stroke="#484b57" stroke-width="2.6" stroke-linecap="round" stroke-linejoin="round"/><path d="M1481.40,449.39 L1481.49,451.27 L1478.88,452.55 L1478.41,453.88 L1479.61,456.52 L1478.35,457.91 L1475.60,456.98 L1474.33,457.58 L1473.31,460.30 L1471.43,460.39 L1470.15,457.78 L1468.82,457.31 L1466.18,458.51 L1464.79,457.25 L1465.72,454.50 L1465.12,453.23 L1462.40,452.21 L1462.31,450.33 L1464.92,449.05 L1465.39,447.72 L1464.19,445.08 L1465.45,443.69 L1468.20,444.62 L1469.47,444.02 L1470.49,441.30 L1472.37,441.21 L1473.65,443.82 L1474.98,444.29 L1477.62,443.09 L1479.01,444.35 L1478.08,447.10 L1478.68,448.37Z" fill="none" stroke="#484b57" stroke-width="2.3" stroke-linejoin="round"/><circle cx="1471.9" cy="450.8" r="3.2" fill="none" stroke="#484b57" stroke-width="2.3"/><path d="M1523 455V442.5M1518.3 447l4.7-4.7 4.7 4.7M1514.8 454.5V459.5H1531.2V454.5" fill="none" stroke="#484b57" stroke-width="2.5" stroke-linecap="round" stroke-linejoin="round"/><path d="M817.6 502.2H830.6M817.6 507.7H825.1M817.6 513H820.1" stroke="#4a4d59" stroke-width="3" stroke-linecap="round"/><path d="M864.7,503.7Q865.822,509.178 871.3000000000001,510.3Q865.822,511.422 864.7,516.9Q863.5780000000001,511.422 858.1,510.3Q863.5780000000001,509.178 864.7,503.7Z" fill="#7a35e8"/><path d="M873,498.3Q873.663,501.537 876.9,502.2Q873.663,502.863 873,506.09999999999997Q872.337,502.863 869.1,502.2Q872.337,501.537 873,498.3Z" fill="#7a35e8"/><path d="M980.3,503.7Q981.4219999999999,509.178 986.9,510.3Q981.4219999999999,511.422 980.3,516.9Q979.178,511.422 973.6999999999999,510.3Q979.178,509.178 980.3,503.7Z" fill="#7a35e8"/><path d="M988.6,498.3Q989.263,501.537 992.5,502.2Q989.263,502.863 988.6,506.09999999999997Q987.937,502.863 984.7,502.2Q987.937,501.537 988.6,498.3Z" fill="#7a35e8"/><path d="M424 226.8C400 216 370 217 345 230C325 241 312 256 303.5 276" fill="none" stroke="#b07af7" stroke-width="6.4"/><path d="M286.5 265.6L327 284L292 310Z" fill="#b07af7"/></svg>
<div class="a" style="left:0;top:1033px;width:1600px;height:18px;background:linear-gradient(rgba(255,255,255,0),rgba(250,250,252,0.6) 35%,rgba(245,245,248,0.97) 85%,rgba(243,244,247,1))"></div>
</body></html>
